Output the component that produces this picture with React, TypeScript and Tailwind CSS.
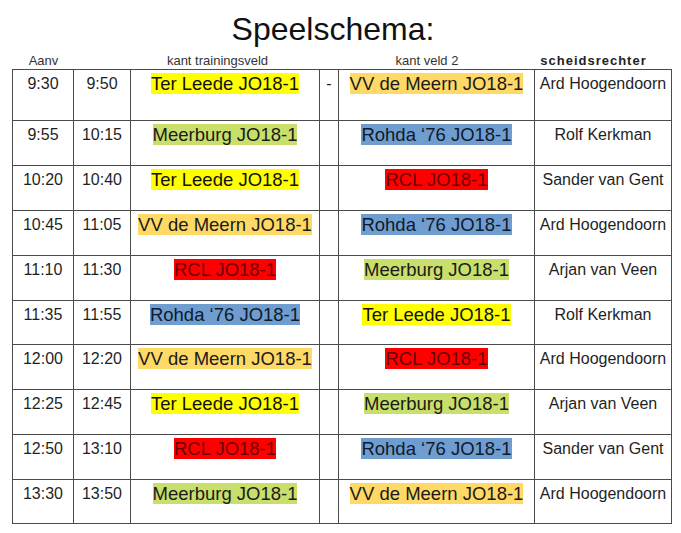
import React from "react";

type Team = "ter" | "vv" | "meer" | "rohda" | "rcl";

interface Match {
  start: string;
  end: string;
  home: Team;
  away: Team;
  ref: string;
  dash?: boolean;
  h: string;
}

const teams: Record<Team, { name: string; cls: string }> = {
  ter: { name: "Ter Leede JO18-1", cls: "bg-[#ffff00] text-[#111]" },
  vv: { name: "VV de Meern JO18-1", cls: "bg-[#ffd966] text-[#1a1a1a]" },
  meer: { name: "Meerburg JO18-1", cls: "bg-[#c8e06b] text-[#1a1a1a]" },
  rohda: { name: "Rohda ‘76 JO18-1", cls: "bg-[#6f9dd0] text-[#0f1a2a]" },
  rcl: { name: "RCL JO18-1", cls: "bg-[#ff0000] text-[#6e0000]" },
};

const matches: Match[] = [
  { start: "9:30", end: "9:50", home: "ter", away: "vv", ref: "Ard Hoogendoorn", dash: true, h: "h-[51px]" },
  { start: "9:55", end: "10:15", home: "meer", away: "rohda", ref: "Rolf Kerkman", h: "h-[45px]" },
  { start: "10:20", end: "10:40", home: "ter", away: "rcl", ref: "Sander van Gent", h: "h-[45px]" },
  { start: "10:45", end: "11:05", home: "vv", away: "rohda", ref: "Ard Hoogendoorn", h: "h-[45px]" },
  { start: "11:10", end: "11:30", home: "rcl", away: "meer", ref: "Arjan van Veen", h: "h-[45px]" },
  { start: "11:35", end: "11:55", home: "rohda", away: "ter", ref: "Rolf Kerkman", h: "h-[44px]" },
  { start: "12:00", end: "12:20", home: "vv", away: "rcl", ref: "Ard Hoogendoorn", h: "h-[45px]" },
  { start: "12:25", end: "12:45", home: "ter", away: "meer", ref: "Arjan van Veen", h: "h-[45px]" },
  { start: "12:50", end: "13:10", home: "rcl", away: "rohda", ref: "Sander van Gent", h: "h-[45px]" },
  { start: "13:30", end: "13:50", home: "meer", away: "vv", ref: "Ard Hoogendoorn", h: "h-[44px]" },
];

const TeamCell: React.FC<{ team: Team; width: string }> = ({ team, width }) => (
  <div className={`${width} shrink-0 border-r border-[#4a4a4a] pt-[3px] text-center text-[18.5px] leading-[21px]`}>
    <span className={teams[team].cls}>{teams[team].name}</span>
  </div>
);

export default function App() {
  return (
    <div
      className="min-h-screen w-[681px] bg-white text-[#1f1f1f]"
      style={{ fontFamily: '"Liberation Sans", Arial, sans-serif' }}
    >
      <h1 className="pt-[10px] pr-[15px] text-center text-[32px] leading-[38px] text-[#111]">
        Speelschema:
      </h1>

      <div className="ml-[12px] w-[660px]">
        <div className="flex h-[21px] items-end pl-px pb-[1px] text-[13px] leading-[15px] text-[#333]">
          <div className="w-[61px] shrink-0 text-center">Aanv</div>
          <div className="w-[57px] shrink-0"></div>
          <div className="w-[189px] shrink-0 pr-[16px] text-center">kant trainingsveld</div>
          <div className="w-[19px] shrink-0"></div>
          <div className="w-[196px] shrink-0 pr-[20px] text-center">kant veld 2</div>
          <div className="w-[137px] shrink-0 pr-[20px] text-center font-bold tracking-[1px] text-[#222]">
            scheidsrechter
          </div>
        </div>

        <div className="border-t border-l border-[#4a4a4a]">
          {matches.map((m, i) => (
            <div key={i} className={`flex ${m.h} border-b border-[#4a4a4a]`}>
              <div className="w-[61px] shrink-0 border-r border-[#4a4a4a] pt-[4px] text-center text-[16px] leading-[19px]">
                {m.start}
              </div>
              <div className="w-[57px] shrink-0 border-r border-[#4a4a4a] pt-[4px] text-center text-[16px] leading-[19px]">
                {m.end}
              </div>
              <TeamCell team={m.home} width="w-[189px]" />
              <div className="w-[19px] shrink-0 border-r border-[#4a4a4a] pt-[4px] text-center text-[16px] leading-[19px]">
                {m.dash ? "-" : ""}
              </div>
              <TeamCell team={m.away} width="w-[196px]" />
              <div className="w-[137px] shrink-0 border-r border-[#4a4a4a] pt-[4px] text-center text-[16px] leading-[19px]">
                {m.ref}
              </div>
            </div>
          ))}
        </div>
      </div>
    </div>
  );
}
